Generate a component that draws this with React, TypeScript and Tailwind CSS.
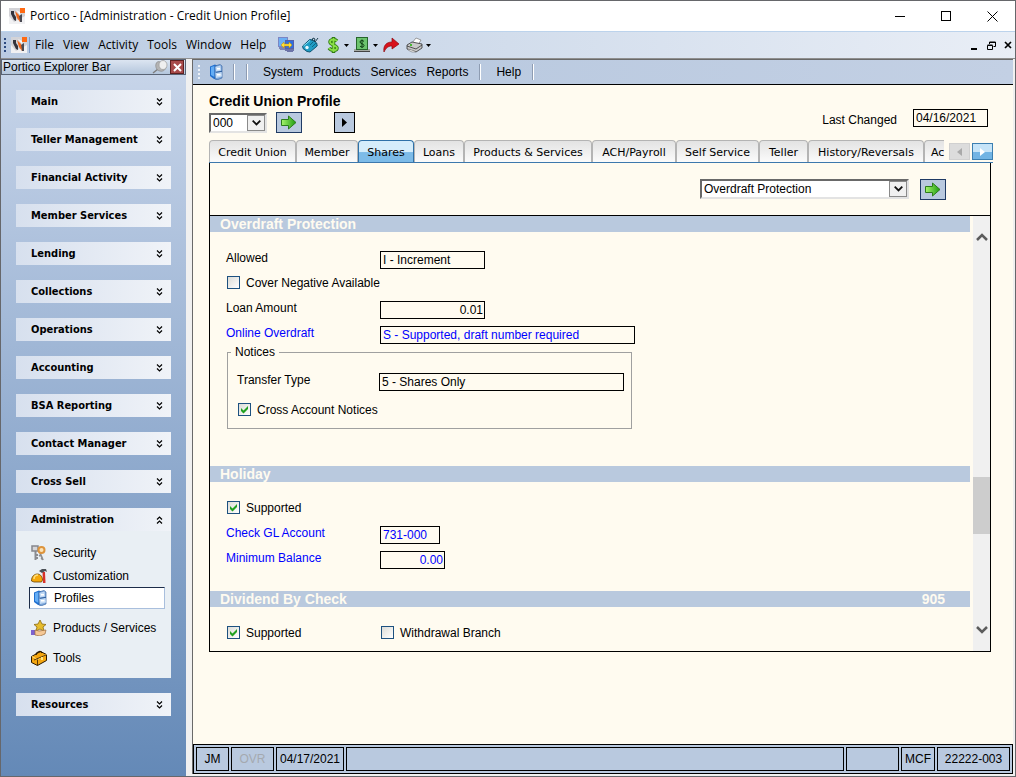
import type { ReactNode } from "react";
import { clsx } from "clsx";

const menuItems = ["File", "View", "Activity", "Tools", "Window", "Help"];

const navGroups = [
  "Main",
  "Teller Management",
  "Financial Activity",
  "Member Services",
  "Lending",
  "Collections",
  "Operations",
  "Accounting",
  "BSA Reporting",
  "Contact Manager",
  "Cross Sell",
];

const tabs = [
  { label: "Credit Union", width: "w-[87px]" },
  { label: "Member", width: "w-[62px]" },
  { label: "Shares", width: "w-[56px]" },
  { label: "Loans", width: "w-[50px]" },
  { label: "Products & Services", width: "w-32" },
  { label: "ACH/Payroll", width: "w-[84px]" },
  { label: "Self Service", width: "w-[83px]" },
  { label: "Teller", width: "w-[49px]" },
  { label: "History/Reversals", width: "w-[116px]" },
];

/* ---------- icons ---------- */

function Logo() {
  return (
    <svg width="16" height="16" viewBox="0 0 16 16" className="shrink-0">
      <rect width="16" height="16" fill="#d3d3d7" />
      <path d="M0 16V8l5 6 11-6v8z" fill="#f1f1f3" />
      <path d="M2 3h3v3l2 3v4L5 12 2 6z" fill="#33333c" />
      <path d="M10 8l3-2v8h-2l-1-3z" fill="#4a4a52" />
      <path d="M6 3l4 4 1 7-3-4z" fill="#f2681c" />
      <path d="M7 2l4 2v3z" fill="#fafafa" />
      <rect x="11" y="0" width="5" height="5" fill="#ff6a13" />
    </svg>
  );
}

function ScreensIcon() {
  return (
    <svg width="17" height="16" viewBox="0 0 17 16">
      <rect x="0.5" y="0.5" width="9" height="9" fill="#6db0f4" stroke="#7b86c4" />
      <path d="M1 10h8v2H1zM2 12h5v1H2z" fill="#7c84b4" />
      <rect x="7.5" y="3.5" width="8" height="8" fill="#2f6fe0" stroke="#5661a8" />
      <path d="M7 12h9v2H7zM9 14h6v1H9z" fill="#6c74a8" />
      <path d="M3 8l3-3v2h5V5l3 3-3 3V9H6v2z" fill="#ffe03a" stroke="#c08a00" strokeWidth="0.5" />
    </svg>
  );
}

function CalculatorIcon() {
  return (
    <svg width="17" height="16" viewBox="0 0 17 16">
      <path d="M0.700 9l7-6.500 3 .5 4 3 .5 3L8 15l-3-.5-4-3z" fill="#1f9cc4" stroke="#0e5674" />
      <path d="M10 4l1-3 2 1-1 3M13 5l3-4" stroke="#1b3f50" fill="none" />
      <path d="M1.500 9L8 3.500" stroke="#8fe0f2" />
      <circle cx="5" cy="10.500" r="1.700" fill="#e8f9ff" />
      <path d="M8 8l3-3M10 10l4-4" stroke="#0e6685" />
    </svg>
  );
}

function DollarIcon() {
  return (
    <svg width="15" height="16" viewBox="0 0 15 16" fill="none">
      <path d="M11 4C9 2 4 2 4 5s7 3 7 6-6 3-8 0M7.500 0v16" stroke="#2f7a12" strokeWidth="3.500" />
      <path d="M11 4C9 2 4 2 4 5s7 3 7 6-6 3-8 0M7.500 1v14" stroke="#8ae045" strokeWidth="1.800" />
    </svg>
  );
}

function CashIcon() {
  return (
    <svg width="16" height="16" viewBox="0 0 16 16" fill="none">
      <path d="M0 12h16v3H0z" fill="#a4aaa4" />
      <path d="M0 14.500h16" stroke="#444" />
      <rect x="2.500" y="0.500" width="11" height="12" fill="#6cc46e" stroke="#26662b" />
      <path d="M10 4.500C9 3 6 3 6 5s4 1.500 4 3.500-3 2-4 .5M8 2.500v8.500" stroke="#0d3d12" />
    </svg>
  );
}

function ForwardIcon() {
  return (
    <svg width="16" height="16" viewBox="0 0 16 16">
      <path d="M1 15c-1-6 2-10 8-10V1l7 6-7 5V9c-4 0-6 2-8 6z" fill="#d8121b" stroke="#8d0a10" strokeWidth="0.7" />
    </svg>
  );
}

function PrinterIcon() {
  return (
    <svg width="17" height="16" viewBox="0 0 17 16">
      <path d="M6 6l4-5 5 2-3 5z" fill="#fff" stroke="#777" strokeWidth="0.7" />
      <path d="M1 8l5-3 10 2v4l-6 4-9-3z" fill="#c9c9c9" stroke="#333" strokeWidth="0.8" />
      <path d="M1 9l9 3 6-4" stroke="#333" fill="none" strokeWidth="0.8" />
      <path d="M2 12l7 2v1H6l-4-2z" fill="#f6f6f6" stroke="#555" strokeWidth="0.5" />
      <rect x="4" y="7" width="2" height="2" fill="#46b82f" />
    </svg>
  );
}

function CabinetIcon() {
  return (
    <svg width="15" height="16" viewBox="0 0 15 16" className="shrink-0">
      <path d="M1 2.500L6 0.500l2 1v14l-3-.5-4-3z" fill="#1f6fd0" />
      <path d="M2 3l3.500-1v11L2 11z" fill="#64adf5" />
      <path d="M6 2l5-1.500 2 1.500v12l-4 1.500-3-.5z" fill="#7fa9dc" stroke="#3a68a8" strokeWidth="0.7" />
      <path d="M6.500 3l5-1.500.5 5-5 1zM6.500 9l6-1 .5 4.500-6 1.500z" fill="#c3dbf5" />
      <path d="M8 4h3v1.500H8zM8 10h3.500v1.500H8z" fill="#fff" />
      <path d="M7 8.300l6-1" stroke="#2f5f9f" />
    </svg>
  );
}

function KeysIcon() {
  return (
    <svg width="16" height="16" viewBox="0 0 16 16" fill="none">
      <path d="M4.500 6v9M5 10h2M5 13h2" stroke="#8a8b90" strokeWidth="2" />
      <path d="M1 1h6v5H1z" fill="#d5d5d8" stroke="#85868c" strokeWidth="1.500" />
      <path d="M9 8l3 7M10 10l-2 1M12 13l-2 1" stroke="#8e8e90" strokeWidth="1.800" />
      <circle cx="10.500" cy="5" r="3" stroke="#dd943c" strokeWidth="2" fill="#fbe3b8" />
    </svg>
  );
}

function HardhatIcon() {
  return (
    <svg width="16" height="16" viewBox="0 0 16 16">
      <path d="M11.500 4l.5 11h2.500L14 4z" fill="#d8322a" />
      <path d="M8 3l3-2h4l1 3-2-1-3 2z" fill="#4b5056" />
      <path d="M0.500 13c0-5 3-7 6-7s5 3 5 6l-1 2H3z" fill="#f5a80b" stroke="#6b4100" strokeWidth="0.8" />
      <path d="M3 11c0-3 2-4 4-4" stroke="#ffe07a" fill="none" strokeWidth="1.500" />
    </svg>
  );
}

function StarHandIcon() {
  return (
    <svg width="16" height="16" viewBox="0 0 16 16">
      <path d="M9 0l2 4 4 .5-3 2.500 1 4-4-2-4 2 1-4-3-2.500 4-.5z" fill="#e6bc2c" stroke="#8c6a10" strokeWidth="0.8" />
      <path d="M0 10h4v5H0z" fill="#7d62cf" />
      <path d="M4 10l4 1 7-1-1 4-5 2-5-1z" fill="#f5c896" stroke="#9b6a3a" strokeWidth="0.7" />
    </svg>
  );
}

function ToolboxIcon() {
  return (
    <svg width="16" height="16" viewBox="0 0 16 16">
      <path d="M0.500 6.500l9-5 6 3v6l-9 5-6-3z" fill="#f4a60f" stroke="#2b1a00" />
      <path d="M1 6.500l5.500 3 9-5" stroke="#ffe07a" fill="none" />
      <path d="M6.500 9.500v6M3 10l12-5" stroke="#5c3600" fill="none" />
      <path d="M5 5c0-3 5-5 6-2" stroke="#2b1a00" fill="none" strokeWidth="1.300" />
      <rect x="10" y="7" width="2" height="3" fill="#ffe680" />
    </svg>
  );
}

function PinIcon() {
  return (
    <svg width="16" height="14" viewBox="0 0 16 14">
      <path d="M1 13l5-4" stroke="#7d7d7d" strokeWidth="1.500" />
      <path d="M4 4c0-2 3-3 4-2l6 5c0 3-4 5-6 4-3 0-5-4-4-7z" fill="#b4b4b4" stroke="#8a8a8a" strokeWidth="0.7" />
      <ellipse cx="11" cy="5" rx="4" ry="4.500" fill="#efefef" stroke="#999" strokeWidth="0.7" />
    </svg>
  );
}

function GreenArrow() {
  return (
    <svg width="16" height="15" viewBox="0 0 16 15">
      <defs>
        <linearGradient id="go" x1="0" x2="1">
          <stop offset="0" stopColor="#a6f56c" />
          <stop offset="1" stopColor="#1c9a10" />
        </linearGradient>
      </defs>
      <path d="M0.500 4.500h7v-3.500l7.500 6.500-7.500 6.500v-3.500h-7z" fill="url(#go)" stroke="#2c7d1c" />
    </svg>
  );
}

function Caret() {
  return (
    <svg width="5" height="3" viewBox="0 0 5 3" className="shrink-0">
      <path d="M0 0h5L2.500 3z" fill="#000" />
    </svg>
  );
}

function DoubleChevron({ up = false }: { up?: boolean }) {
  return (
    <svg width="7" height="8" viewBox="0 0 7 8" fill="none" className={clsx(up && "rotate-180")}>
      <path d="M1 0.500l2.500 2.500L6 0.500M1 4.500l2.500 2.500L6 4.500" stroke="#000" strokeWidth="1.200" />
    </svg>
  );
}

/* ---------- small controls ---------- */

function Grip({ className }: { className: string }) {
  return (
    <span className={clsx("flex flex-col gap-[2px]", className)}>
      {[0, 1, 2, 3].map((n) => (
        <span key={n} className="size-[2px] bg-current" />
      ))}
    </span>
  );
}

function Separator() {
  return <span className="h-4 w-[2px] border-l border-[#8e9cb2] bg-white" />;
}

function PickList({ label, value, className }: { label: string; value: string; className: string }) {
  return (
    <div
      className={clsx(
        "grid h-5 border-2 border-t-[#696969] border-r-[#e3e3e3] border-b-[#e3e3e3] border-l-[#696969] bg-white",
        className
      )}
    >
      <select aria-label={label} className="col-start-1 row-start-1 appearance-none pl-[2px] leading-4 outline-none">
        <option>{value}</option>
      </select>
      <span className="pointer-events-none col-start-1 row-start-1 grid w-[18px] place-items-center justify-self-end border border-[#8a8a8a] bg-[#f0f0f0]">
        <svg width="9" height="6" viewBox="0 0 9 6" fill="none">
          <path d="M0.700 0.700l3.800 3.800L8.300 0.700" stroke="#111" strokeWidth="1.800" />
        </svg>
      </span>
    </div>
  );
}

function GoButton({ label }: { label: string }) {
  return (
    <button aria-label={label} className="grid h-[21px] w-[26px] place-items-center border border-[#1f3a64] bg-[#b9c9df]">
      <GreenArrow />
    </button>
  );
}

function CheckRow({ label, checked = false }: { label: string; checked?: boolean }) {
  return (
    <label className="flex h-[25px] items-center gap-[6px] pl-px">
      <span className="grid">
        <input
          type="checkbox"
          defaultChecked={checked}
          className="peer col-start-1 row-start-1 size-[13px] appearance-none border border-[#1d5180] bg-linear-to-br from-[#dcdcd7] to-white"
        />
        <svg
          viewBox="0 0 13 13"
          className="pointer-events-none invisible col-start-1 row-start-1 size-[13px] peer-checked:visible"
        >
          <path d="M3 5l2.500 2.500L10 3v3l-4.500 4.500L3 8z" fill="#21a121" />
        </svg>
      </span>
      {label}
    </label>
  );
}

type FieldProps = {
  id: string;
  label: string;
  value: string;
  width: string;
  labelWidth?: string;
  blue?: boolean;
  right?: boolean;
};

function Field({ id, label, value, width, labelWidth = "w-[154px]", blue, right }: FieldProps) {
  return (
    <div className={clsx("flex h-[25px] items-center", blue && "text-[#0000ff]")}>
      <label htmlFor={id} className={clsx("shrink-0", labelWidth)}>
        {label}
      </label>
      <input
        id={id}
        readOnly
        value={value}
        className={clsx(
          "mt-1 h-[18px] border border-black bg-transparent outline-none",
          width,
          right ? "pr-px text-right" : "pl-[2px]"
        )}
      />
    </div>
  );
}

function Section({ title, code, children }: { title: string; code?: string; children: ReactNode }) {
  return (
    <section>
      <h2 className="flex h-4 items-center justify-between bg-[#b9c9de] pr-[25px] pl-[10px] text-[14px] leading-4 font-bold text-[#fffbf0]">
        {title}
        {code && <span>{code}</span>}
      </h2>
      <div className="pt-[13px] pl-4">{children}</div>
    </section>
  );
}

/* ---------- window parts ---------- */

function TitleBar() {
  return (
    <header className="flex h-[30px] items-center bg-white pr-[17px] pl-2 font-['Open_Sans',sans-serif] text-[12px]">
      <Logo />
      <h1 className="ml-[5px] flex-1">Portico - [Administration - Credit Union Profile]</h1>
      <div className="flex items-center gap-[35px]">
        <button aria-label="Minimize">
          <svg width="11" height="11" viewBox="0 0 11 11">
            <path d="M0 5.500h10" stroke="#000" />
          </svg>
        </button>
        <button aria-label="Maximize">
          <svg width="11" height="11" viewBox="0 0 11 11" fill="none">
            <rect x="0.500" y="0.500" width="9" height="9" stroke="#000" />
          </svg>
        </button>
        <button aria-label="Close">
          <svg width="11" height="11" viewBox="0 0 11 11">
            <path d="M0.500 0.500l10 10M10.500 0.500l-10 10" stroke="#000" />
          </svg>
        </button>
      </div>
    </header>
  );
}

function MenuBar() {
  return (
    <div className="flex h-[27px] items-center border-t border-[#bcd3ec] bg-linear-to-r from-[#bacbe2] via-[#d2ddec] to-[#e9eef6] px-[3px] font-['Open_Sans',sans-serif] text-[12px]">
      <Grip className="text-[#2c4a80]" />
      <span className="ml-[5px] flex items-center gap-[2px]">
        <Logo />
        <span className="h-4 w-px bg-[#7f9cc9]" />
      </span>
      <nav className="ml-[5px] flex gap-[9px]">
        {menuItems.map((item) => (
          <button key={item}>{item}</button>
        ))}
      </nav>
      <div className="ml-3 flex flex-1 items-center gap-[5px]">
        <button aria-label="Switch session" className="pr-[2px]"><ScreensIcon /></button>
        <button aria-label="Calculator" className="pr-[2px]"><CalculatorIcon /></button>
        <button aria-label="Currency" className="flex items-center gap-[3px]"><DollarIcon /><Caret /></button>
        <button aria-label="Cash" className="flex items-center gap-[3px]"><CashIcon /><Caret /></button>
        <button aria-label="Forward" className="pr-[2px]"><ForwardIcon /></button>
        <button aria-label="Print" className="flex items-center gap-[3px]"><PrinterIcon /><Caret /></button>
      </div>
      <div className="flex items-center gap-2">
        <button aria-label="Minimize window">
          <svg width="9" height="9" viewBox="0 0 9 9">
            <path d="M1 7h6v2H1z" />
          </svg>
        </button>
        <button aria-label="Restore window">
          <svg width="9" height="9" viewBox="0 0 9 9" fill="none" stroke="#000">
            <path d="M2.500 3V1h6v4.500H6.500M2.500 1.500h6" />
            <path d="M0.500 4.500h5v4h-5zM0.500 4h5" />
          </svg>
        </button>
        <button aria-label="Close window">
          <svg width="8" height="8" viewBox="0 0 8 8">
            <path d="M1 1l6 6M7 1L1 7" stroke="#000" strokeWidth="1.700" />
          </svg>
        </button>
      </div>
    </div>
  );
}

function NavHeading({ title, open = false }: { title: string; open?: boolean }) {
  return (
    <button
      aria-expanded={open}
      className="flex h-[23px] w-full items-center justify-between bg-linear-to-r from-[#d7e0ee] to-[#f0f3f8] pr-2 pl-[15px] font-['DejaVu_Sans_Condensed','Noto_Sans',sans-serif] text-[11px] font-bold"
    >
      {title}
      <DoubleChevron up={open} />
    </button>
  );
}

function NavLink({ icon, children }: { icon: ReactNode; children: ReactNode }) {
  return (
    <a href="#" className="flex h-[23px] items-center gap-[6px] pl-[15px]">
      {icon}
      {children}
    </a>
  );
}

function Sidebar() {
  return (
    <aside className="w-[185px] shrink-0 bg-linear-to-b from-[#c9d6ea] to-[#6489b7]">
      <div className="flex h-4 items-center border border-[#5a6475] bg-linear-to-b from-[#dce5f1] to-[#b4c6dc] pl-px">
        <h2 className="flex-1 leading-[14px]">Portico Explorer Bar</h2>
        <button aria-label="Pin"><PinIcon /></button>
        <button
          aria-label="Close explorer bar"
          className="mr-px ml-[2px] grid size-[14px] place-items-center border border-[#5e1f1f] bg-[#a84a4a]"
        >
          <svg width="9" height="9" viewBox="0 0 9 9">
            <path d="M1 1l7 7M8 1L1 8" stroke="#fff" strokeWidth="2" />
          </svg>
        </button>
      </div>
      <nav className="flex flex-col gap-[15px] px-[15px] pt-[15px]">
        {navGroups.map((group) => (
          <NavHeading key={group} title={group} />
        ))}
        <div className="bg-[#e9eff4]">
          <NavHeading title="Administration" open />
          <div className="pt-[10px] pb-[9px]">
            <NavLink icon={<KeysIcon />}>Security</NavLink>
            <NavLink icon={<HardhatIcon />}>Customization</NavLink>
            <a
              href="#"
              aria-current="page"
              className="mr-[6px] ml-[13px] flex h-[22px] items-center gap-[6px] border border-t-[#1c2c48] border-r-[#a9bfdd] border-b-[#a9bfdd] border-l-[#1c2c48] bg-white pl-[3px]"
            >
              <CabinetIcon />
              Profiles
            </a>
            <div className="flex flex-col gap-[7px] pt-[7px]">
              <NavLink icon={<StarHandIcon />}>Products / Services</NavLink>
              <NavLink icon={<ToolboxIcon />}>Tools</NavLink>
            </div>
          </div>
        </div>
        <NavHeading title="Resources" />
      </nav>
    </aside>
  );
}

function Toolbar() {
  return (
    <div className="flex h-[25px] items-center border-b border-black bg-linear-to-r from-[#b6c7de] to-[#c3d0e4] pb-px pl-[5px]">
      <Grip className="text-[#eef2f8]" />
      <button aria-label="Profiles" className="mx-[9px]"><CabinetIcon /></button>
      <Separator />
      <span className="w-[11px]" />
      <Separator />
      <nav className="mr-[11px] ml-[15px] flex gap-[10px]">
        <button>System</button>
        <button>Products</button>
        <button>Services</button>
        <button>Reports</button>
      </nav>
      <Separator />
      <button className="mr-[11px] ml-[15px]">Help</button>
      <Separator />
    </div>
  );
}

function TabStrip() {
  return (
    <div className="flex items-end border-b border-[#3d78ad] font-['DejaVu_Sans',sans-serif] text-[11px]">
      <div role="tablist" className="flex min-w-0 flex-1">
        {tabs.map(({ label, width }) => (
          <button
            key={label}
            role="tab"
            aria-selected={label === "Shares"}
            className={clsx(
              "h-[22px] shrink-0 rounded-t-[4px] border border-b-0 pt-[3px] whitespace-nowrap",
              width,
              label === "Shares"
                ? "border-[#2f71a8] bg-linear-to-b from-[#d5edfb] from-50% to-[#7dbbe8] to-55%"
                : "border-[#b4b4b4] bg-linear-to-b from-[#e3e3e3] to-[#fbfbfb]"
            )}
          >
            {label}
          </button>
        ))}
        {/* last tab runs under the scroll buttons */}
        <button
          role="tab"
          className="h-[22px] min-w-0 flex-1 rounded-tl-[4px] border border-r-0 border-b-0 border-[#b4b4b4] bg-linear-to-b from-[#e3e3e3] to-[#fbfbfb] pt-[3px] pl-[6px] text-left"
        >
          Ac
        </button>
      </div>
      <button aria-label="Previous tabs" className="mb-[2px] ml-[5px] grid h-[17px] w-[21px] place-items-center border border-[#d0d0d0] bg-[#dcdcdc]">
        <svg width="5" height="8" viewBox="0 0 5 8">
          <path d="M5 0v8L0 4z" fill="#a9a9a9" />
        </svg>
      </button>
      <button
        aria-label="Next tabs"
        className="mb-[2px] ml-[2px] grid h-[17px] w-[21px] place-items-center border border-[#3c7fb1] bg-linear-to-b from-[#c6e4f8] from-50% to-[#72b4e4] to-55%"
      >
        <svg width="5" height="8" viewBox="0 0 5 8">
          <path d="M0 0v8l5-4z" fill="#fff" />
        </svg>
      </button>
    </div>
  );
}

function ScrollBar() {
  return (
    <div className="flex w-[17px] shrink-0 flex-col items-center bg-[#f0f0f0] py-4">
      <svg width="12" height="9" viewBox="0 0 12 9" fill="none">
        <path d="M1 8l5-5 5 5" stroke="#5c5c5c" strokeWidth="2.500" />
      </svg>
      <span className="flex-[236]" />
      <span className="h-[57px] w-full bg-[#cdcdcd]" />
      <span className="flex-[92]" />
      <svg width="12" height="9" viewBox="0 0 12 9" fill="none">
        <path d="M1 1l5 5 5-5" stroke="#5c5c5c" strokeWidth="2.500" />
      </svg>
    </div>
  );
}

function SharesPanel() {
  return (
    <div className="mr-[2px] border border-t-0 border-black">
      <div className="flex h-[53px] items-center justify-end gap-[11px] border-b border-black pr-[44px]">
        <PickList label="Section" value="Overdraft Protection" className="w-[209px]" />
        <GoButton label="Go to section" />
      </div>
      <div className="flex">
        <div className="mr-[3px] flex-1 pb-[6px]">
          <Section title="Overdraft Protection">
            <Field id="allowed" label="Allowed" value="I - Increment" width="w-[105px]" />
            <CheckRow label="Cover Negative Available" />
            <Field id="loan" label="Loan Amount" value="0.01" width="w-[105px]" right />
            <Field id="online" label="Online Overdraft" value="S - Supported, draft number required" width="w-[255px]" blue />
            <fieldset className="ml-px w-[405px] border border-[#a0a0a0] pb-[6px] pl-[9px]">
              <legend className="-ml-[6px] px-1 leading-[14px]">Notices</legend>
              <div className="flex flex-col gap-[5px] pt-2">
                <Field
                  id="transfer"
                  label="Transfer Type"
                  value="5 - Shares Only"
                  width="w-[245px]"
                  labelWidth="w-[142px]"
                />
                <CheckRow label="Cross Account Notices" checked />
              </div>
            </fieldset>
          </Section>
          <div className="h-[37px]" />
          <Section title="Holiday">
            <CheckRow label="Supported" checked />
            <Field id="gl" label="Check GL Account" value="731-000" width="w-[60px]" blue />
            <Field id="minimum" label="Minimum Balance" value="0.00" width="w-[65px]" blue right />
          </Section>
          <div className="h-[21px]" />
          <Section title="Dividend By Check" code="905">
            <div className="flex">
              <div className="w-[154px]">
                <CheckRow label="Supported" checked />
              </div>
              <CheckRow label="Withdrawal Branch" />
            </div>
          </Section>
        </div>
        <ScrollBar />
      </div>
    </div>
  );
}

function StatusCell({ children, className }: { children?: ReactNode; className: string }) {
  return <span className={clsx("grid place-items-center border border-black", className)}>{children}</span>;
}

function StatusBar() {
  return (
    <footer className="flex h-[30px] gap-[2px] border border-black bg-[#b9c9df] p-[2px]">
      <StatusCell className="w-[33px]">JM</StatusCell>
      <StatusCell className="w-[43px] text-[#a5a9b0]">OVR</StatusCell>
      <StatusCell className="w-[68px]">04/17/2021</StatusCell>
      <StatusCell className="flex-1" />
      <StatusCell className="w-[53px]" />
      <StatusCell className="w-[34px]">MCF</StatusCell>
      <StatusCell className="w-[73px]">22222-003</StatusCell>
    </footer>
  );
}

export default function App() {
  return (
    <div className="flex min-h-screen flex-col border border-[#66676b] bg-[#f0f0f0] font-['Liberation_Sans',Arial,sans-serif] text-[12px] leading-4 text-black">
      <TitleBar />
      <MenuBar />
      <div className="flex flex-1 border-t border-[#8f8f8f]">
        <Sidebar />
        <div className="mr-[2px] mb-[2px] ml-[6px] flex min-w-0 flex-1 flex-col border-t border-l border-[#696969] bg-[#fffbf0]">
          <Toolbar />
          <main className="flex-1 pr-5 pl-4">
            <div className="flex justify-between">
              <div className="pt-2 pb-[7px]">
                <h2 className="text-[14px] leading-4 font-bold">Credit Union Profile</h2>
                <div className="flex items-center pt-[3px]">
                  <PickList label="Profile number" value="000" className="w-[58px]" />
                  <span className="w-[9px]" />
                  <GoButton label="Open profile" />
                  <span className="w-8" />
                  <button aria-label="Next record" className="grid size-[21px] place-items-center border border-black bg-[#b9c9df]">
                    <svg width="5" height="9" viewBox="0 0 5 9">
                      <path d="M0 0v9l5-4.500z" />
                    </svg>
                  </button>
                </div>
              </div>
              <div className="flex items-start gap-4 pt-6 pr-[5px]">
                <label htmlFor="changed" className="pt-[3px]">Last Changed</label>
                <input
                  id="changed"
                  readOnly
                  value="04/16/2021"
                  className="h-[18px] w-[75px] border border-black bg-transparent pl-[2px] outline-none"
                />
              </div>
            </div>
            <TabStrip />
            <SharesPanel />
          </main>
          <StatusBar />
        </div>
      </div>
    </div>
  );
}
